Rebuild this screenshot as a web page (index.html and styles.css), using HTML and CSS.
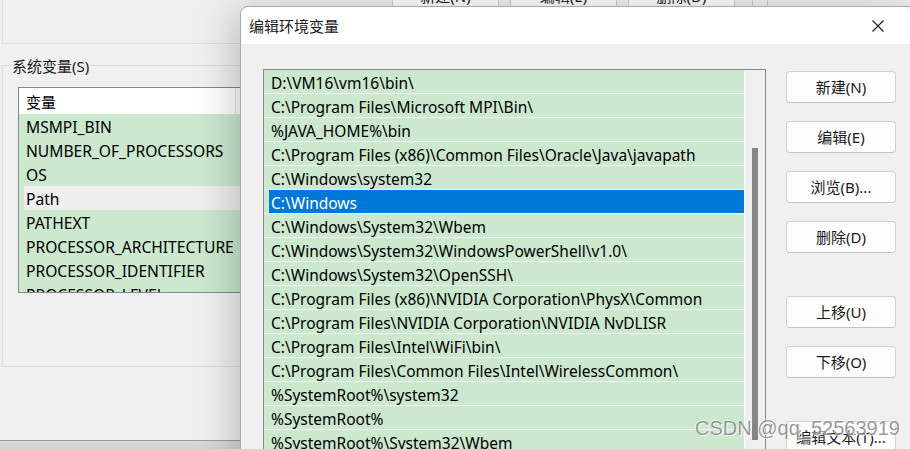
FILE: index.html
```html
<!DOCTYPE html>
<html lang="zh-CN">
<head>
<meta charset="utf-8">
<title>编辑环境变量</title>
<link rel="stylesheet" href="styles.css">
</head>
<body>
<div class="desktop">
  <div class="bgwin">
    <div class="user-group">
      <div class="bg-buttons">
        <div class="bg-btn">新建(N)</div>
        <div class="bg-btn">编辑(E)</div>
        <div class="bg-btn">删除(D)</div>
        <div class="bg-marks"></div>
      </div>
    </div>
    <div class="sys-group">
      <div class="sys-label">系统变量(S)</div>
      <div class="sys-list">
        <div class="sys-head"><span class="col">变量</span></div>
        <div class="sys-row">MSMPI_BIN</div>
        <div class="sys-row">NUMBER_OF_PROCESSORS</div>
        <div class="sys-row">OS</div>
        <div class="sys-row sel"><span>Path</span></div>
        <div class="sys-row">PATHEXT</div>
        <div class="sys-row">PROCESSOR_ARCHITECTURE</div>
        <div class="sys-row">PROCESSOR_IDENTIFIER</div>
        <div class="sys-row">PROCESSOR_LEVEL</div>
      </div>
    </div>
    <div class="bottom-bar"></div>
  </div>

  <div class="dialog">
    <div class="titlebar">
      <span class="title">编辑环境变量</span>
      <svg class="close" width="12" height="12" viewBox="0 0 12 12"><path d="M0.5 0.5 L11.5 11.5 M11.5 0.5 L0.5 11.5" stroke="#1a1a1a" stroke-width="1.1" fill="none"/></svg>
    </div>
    <div class="dbody">
      <div class="plist">
        <div class="rows">
          <div class="prow">D:\VM16\vm16\bin\</div>
          <div class="prow">C:\Program Files\Microsoft MPI\Bin\</div>
          <div class="prow">%JAVA_HOME%\bin</div>
          <div class="prow">C:\Program Files (x86)\Common Files\Oracle\Java\javapath</div>
          <div class="prow">C:\Windows\system32</div>
          <div class="prow sel"><span>C:\Windows</span></div>
          <div class="prow">C:\Windows\System32\Wbem</div>
          <div class="prow">C:\Windows\System32\WindowsPowerShell\v1.0\</div>
          <div class="prow">C:\Windows\System32\OpenSSH\</div>
          <div class="prow">C:\Program Files (x86)\NVIDIA Corporation\PhysX\Common</div>
          <div class="prow">C:\Program Files\NVIDIA Corporation\NVIDIA NvDLISR</div>
          <div class="prow">C:\Program Files\Intel\WiFi\bin\</div>
          <div class="prow">C:\Program Files\Common Files\Intel\WirelessCommon\</div>
          <div class="prow">%SystemRoot%\system32</div>
          <div class="prow">%SystemRoot%</div>
          <div class="prow">%SystemRoot%\System32\Wbem</div>
        </div>
        <div class="vscroll"><div class="thumb"></div></div>
      </div>
      <div class="btns">
        <div class="btn">新建(N)</div>
        <div class="btn">编辑(E)</div>
        <div class="btn">浏览(B)...</div>
        <div class="btn">删除(D)</div>
        <div class="btn far">上移(U)</div>
        <div class="btn">下移(O)</div>
        <div class="btn far">编辑文本(T)...</div>
      </div>
    </div>
  </div>

  <div class="watermark">CSDN @qq_52563919</div>
</div>
</body>
</html>
```

FILE: styles.css
```css
* { box-sizing: border-box; }
html, body { margin: 0; padding: 0; }
body {
  width: 910px;
  height: 449px;
  overflow: hidden;
  background: #f0f0f0;
  font-family: "Noto Sans", "Noto Sans CJK SC", sans-serif;
  font-size: 15px;
  color: #000;
}
.desktop {
  position: relative;
  width: 910px;
  height: 449px;
  overflow: hidden;
}

/* background window */
.bgwin {
  display: flex;
  flex-direction: column;
  height: 449px;
}
.user-group {
  margin-left: 2px;
  height: 44px;
  border-left: 1px solid #dcdcdc;
  border-bottom: 1px solid #dcdcdc;
  flex: none;
}
.bg-buttons {
  display: flex;
  margin-top: -17px;
  padding-left: 389px;
  gap: 11px;
}
.bg-btn {
  width: 107px;
  height: 26px;
  border: 1px solid #cfcfcf;
  border-radius: 3px;
  background: #fdfdfd;
  text-align: center;
  line-height: 24px;
  color: #1a1a1a;
}
.bg-marks {
  width: 16px;
  height: 26px;
  margin-left: 6px;
  border-left: 1px solid #cfcfcf;
  border-right: 1px solid #cfcfcf;
}
.sys-group {
  flex: none;
  margin-top: 21px;
  margin-left: 2px;
  height: 302px;
  border-left: 1px solid #dcdcdc;
  border-top: 1px solid #dcdcdc;
  border-bottom: 1px solid #dcdcdc;
}
.sys-label {
  width: fit-content;
  margin-top: -11px;
  margin-left: 8px;
  padding: 0 1px;
  line-height: 22px;
  background: #f0f0f0;
  color: #1a1a1a;
}
.sys-list {
  margin-top: 10px;
  margin-left: 15px;
  width: 320px;
  height: 206px;
  border: 1px solid #828790;
  background: #cce8cf;
  overflow: hidden;
}
.sys-head {
  height: 26px;
  background: #fff;
  line-height: 28px;
  padding-left: 7px;
}
.sys-head .col {
  display: block;
  width: 210px;
  height: 26px;
  border-right: 1px solid #e5e5e5;
}
.sys-row {
  height: 24px;
  line-height: 26px;
  padding-left: 7px;
  white-space: nowrap;
  font-size: 15.6px;
}
.sys-row.sel { padding-left: 5px; }
.sys-row.sel span {
  display: block;
  height: 24px;
  background: #efefef;
  padding-left: 2px;
}
.bottom-bar {
  flex: 1;
  margin-top: 73px;
  border-top: 1px solid #9c9c9c;
  background: linear-gradient(#dadada, #d2d2d2);
}

/* dialog */
.dialog {
  position: absolute;
  left: 240px;
  top: 6px;
  width: 680px;
  height: 460px;
  background: #f0f0f0;
  border: 1px solid #a9a9a9;
  border-radius: 8px 8px 0 0;
  box-shadow: -6px 4px 40px rgba(0, 0, 0, 0.22);
  display: flex;
  flex-direction: column;
}
.titlebar {
  height: 37px;
  flex: none;
  background: #fff;
  border-radius: 8px 8px 0 0;
  display: flex;
  align-items: center;
  padding-left: 8px;
  padding-right: 27px;
  justify-content: space-between;
  width: 670px;
}
.title { color: #1a1a1a; line-height: 20px; }
.close { display: block; }
.dbody {
  display: flex;
  gap: 20px;
  padding-top: 25px;
  padding-left: 22px;
}
.plist {
  width: 503px;
  height: 400px;
  border: 1px solid #828790;
  display: flex;
  background: #cce8cf;
  flex: none;
}
.rows {
  width: 480px;
  overflow: hidden;
}
.prow {
  height: 24px;
  line-height: 26px;
  border-bottom: 1px solid #eef3ee;
  padding-left: 7px;
  white-space: nowrap;
  font-size: 15.5px;
}
.prow.sel { padding-left: 5px; }
.prow.sel span {
  display: block;
  height: 23px;
  overflow: hidden;
  background: #0078d7;
  color: #fff;
  padding-left: 2px;
}
.vscroll {
  width: 21px;
  background: #f0f0f0;
  border-left: 1px solid #fafafa;
  padding-left: 7px;
  padding-top: 78px;
}
.thumb {
  width: 6px;
  height: 292px;
  background: #868686;
}
.btns {
  display: flex;
  flex-direction: column;
  gap: 18px;
  padding-top: 2px;
}
.btn {
  width: 110px;
  height: 32px;
  border: 1px solid #d0d0d0;
  border-bottom-color: #c4c4c4;
  border-radius: 4px;
  background: #fdfdfd;
  text-align: center;
  line-height: 30px;
  color: #1a1a1a;
}
.btn.far { margin-top: 25px; }

.watermark {
  position: absolute;
  left: 695px;
  top: 417px;
  font-family: "Liberation Sans", Arial, sans-serif;
  font-size: 20px;
  color: rgba(120, 120, 120, 0.75);
  text-shadow: 1px 1px 0 rgba(255, 255, 255, 0.8), -1px -1px 0 rgba(255, 255, 255, 0.5);
  white-space: nowrap;
}
```
